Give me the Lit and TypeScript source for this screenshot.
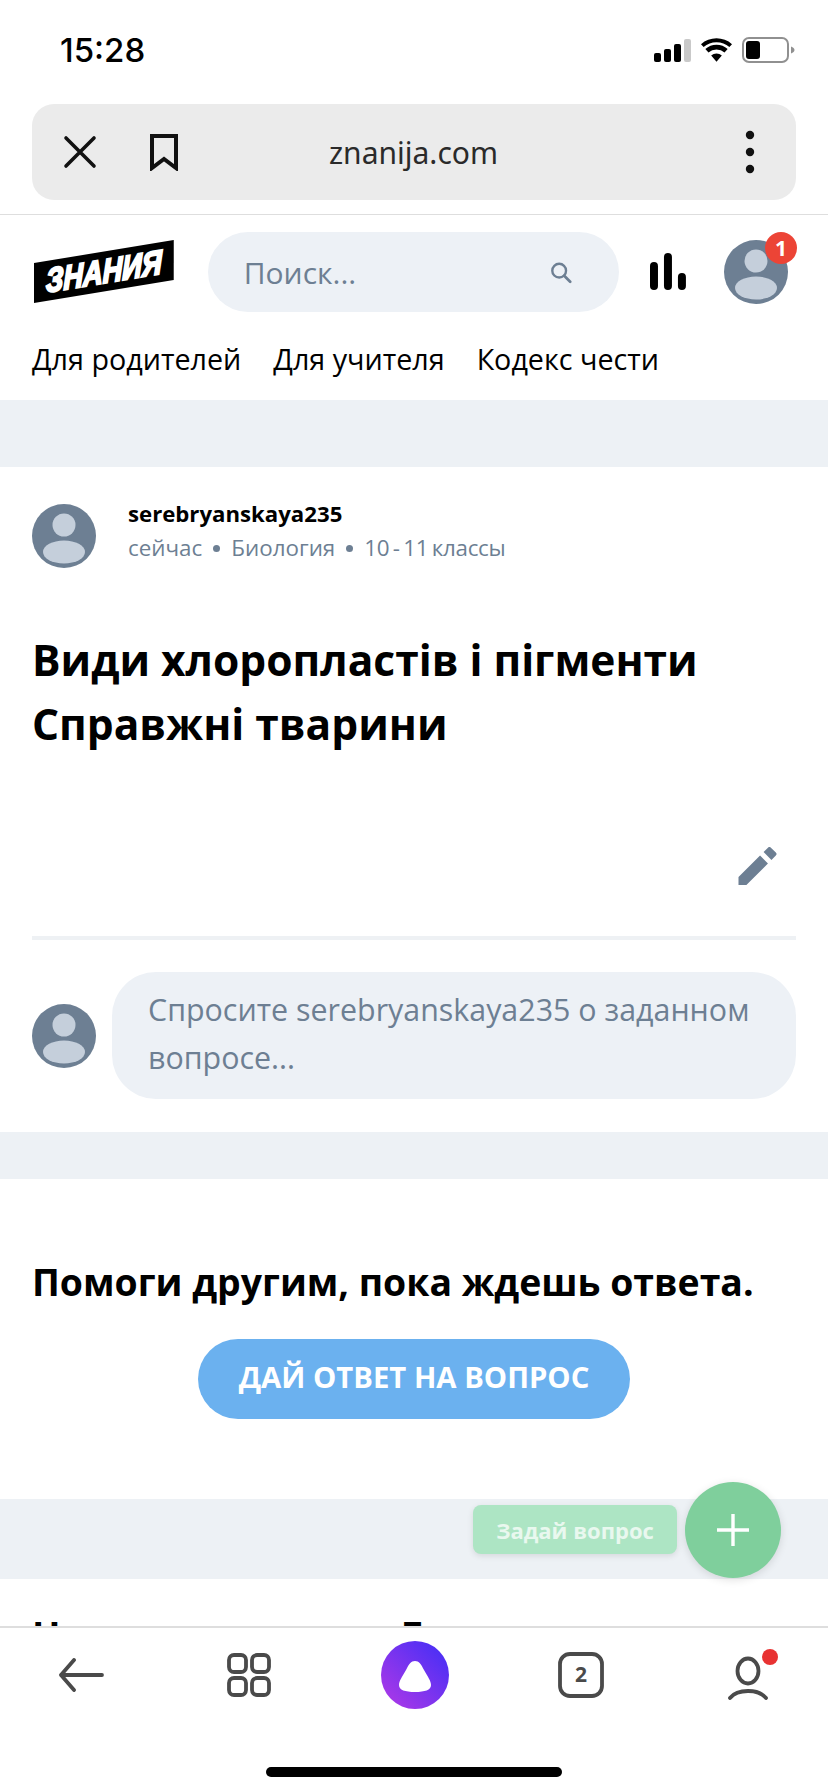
import { LitElement, html, css } from "lit";
import { customElement } from "lit/decorators.js";

const avatar = (size: number) => html`<svg class="avatar" width=${size} height=${size} viewBox="0 0 64 64">
  <circle cx="32" cy="32" r="32" fill="#6d7f93"/>
  <circle cx="32" cy="21" r="11.5" fill="#c5cfdb"/>
  <ellipse cx="32" cy="48" rx="21" ry="11.5" fill="#c5cfdb"/>
</svg>`;

@customElement("app-root")
export class AppRoot extends LitElement {
  static styles = css`
    :host { display: block; width: 828px; height: 1792px; overflow: hidden; background: #fff; position: relative;
      font-family: "Open Sans", "Noto Sans", sans-serif; color: #000; }
    * { box-sizing: border-box; }
    .page { display: flex; flex-direction: column; height: 1792px; }
    .status { height: 104px; flex: none; display: flex; align-items: flex-start; justify-content: space-between; padding: 30px 33px 0 60px; }
    .time { font-family: Inter, sans-serif; font-weight: 500; font-size: 33px; line-height: 40px; }
    .status-icons { display: flex; align-items: center; gap: 10px; height: 40px; }
    .browser { flex: none; height: 111px; padding: 0 32px; border-bottom: 1px solid #dedede; }
    .urlbar { height: 96px; border-radius: 22px; background: #ebebeb; display: grid; grid-template-columns: 1fr auto 1fr; align-items: center; padding: 0 41px 0 31px; }
    .url-left { display: flex; align-items: center; gap: 52px; }
    .url { font-family: "Noto Sans", sans-serif; font-size: 30px; color: #2a2a2a; margin-left: 9px; }
    .url-right { justify-self: end; display: flex; }
    .main { flex: 1; min-height: 0; overflow: hidden; }
    .topbar { display: flex; align-items: center; height: 96px; margin-top: 9px; padding: 0 40px 0 34px; }
    .search { margin-left: 33px; width: 412px; height: 80px; border-radius: 40px; background: #edf1f6; display: flex; align-items: center; justify-content: space-between; padding: 0 47px 0 36px; color: #6d7f93; font-size: 30px; }
    .charts { margin-left: 31px; }
    .profile { margin-left: 38px; position: relative; width: 64px; height: 64px; }
    .badge { position: absolute; left: 41px; top: -8px; width: 32px; height: 32px; border-radius: 50%; background: #ec4436; color: #fff; font: 700 21px/32px "Open Sans", sans-serif; text-align: center; }
    .nav { display: flex; gap: 32px; padding: 0 32px 4px; height: 80px; align-items: center; font-size: 28.7px; white-space: nowrap; }
    .band { background: #edf1f5; flex: none; }
    .b1 { height: 67px; }
    .b2 { height: 47px; }
    .b3 { height: 80px; }
    .meta-row { display: flex; gap: 32px; padding: 37px 32px 0; align-items: flex-start; }
    .name { font-weight: 700; font-size: 22.2px; line-height: 20px; }
    .meta { display: flex; gap: 11px; align-items: center; font-size: 22.4px; line-height: 30px; color: #6d7f93; margin-top: 9px; }
    .grade { letter-spacing: -0.3px; word-spacing: -2px; }
    .dot { width: 7px; height: 7px; border-radius: 50%; background: #6d7f93; }
    h1 { margin: 0; padding: 60px 32px 0; font-weight: 700; font-size: 42.5px; line-height: 64px; }
    .edit { display: flex; justify-content: flex-end; padding: 91px 51px 0 0; height: 180px; }
    .divider { height: 4px; background: #eef1f4; margin: 0 32px; }
    .ask { display: flex; align-items: center; gap: 16px; padding: 32px 32px 33px; }
    .bubble { flex: 1; height: 127px; border-radius: 44px; background: #edf1f6; color: #6d7f93; font-size: 30.4px; line-height: 48px; padding: 14px 36px; }
    h2 { margin: 0; font-weight: 700; font-size: 37.4px; line-height: 48px; padding: 0 32px; white-space: nowrap; }
    .help { padding-top: 79px; height: 320px; }
    .cta-wrap { display: flex; justify-content: center; padding-top: 33px; }
    .cta { width: 432px; height: 80px; border-radius: 40px; background: #6bb1ef; color: #fff; font-weight: 700; font-size: 29.3px; display: flex; align-items: center; justify-content: center; padding-bottom: 4px; }
    .next { padding-top: 32px; }
    .next h2 { word-spacing: 6px; }
    .bottom { flex: none; height: 166px; border-top: 2px solid #dedede; background: #fff; position: relative; }
    .tabs { display: grid; grid-template-columns: repeat(5, 1fr); height: 94px; align-items: center; justify-items: center; padding-left: 2px; }
    .tabs > * { display: block; }
    .t-back { margin-right: 7px; }
    .t-grid { margin-right: 2px; }
    .t-count { margin-left: 2px; }
    .t-user { margin-left: 5px; }
    .home { width: 296px; height: 10px; background: #000; border-radius: 5px; margin: 45px auto 0; }
    .fab { position: absolute; left: 685px; top: 1482px; width: 96px; height: 96px; border-radius: 50%; background: #7fcf9c; box-shadow: 0 2px 8px rgba(0,0,0,.12); display: flex; align-items: center; justify-content: center; }
    .tip { position: absolute; left: 473px; top: 1505px; width: 204px; height: 49px; border-radius: 8px; background: #ade5c4; box-shadow: 0 2px 6px rgba(0,0,0,.1); color: #e9f8ef; font-weight: 700; font-size: 22px; display: flex; align-items: center; justify-content: center; }
  `;

  render() {
    return html`<div class="page">
      <div class="status">
        <span class="time">15:28</span>
        <div class="status-icons">
          <svg width="37" height="23" viewBox="0 0 37 23">
            <rect x="0" y="14" width="7" height="9" rx="2" fill="#000"/>
            <rect x="10" y="10" width="7" height="13" rx="2" fill="#000"/>
            <rect x="20" y="5" width="7" height="18" rx="2" fill="#000"/>
            <rect x="30" y="0" width="7" height="23" rx="2" fill="#c9c9c9"/>
          </svg>
          <svg width="31" height="24" viewBox="0 0 32 24">
            <path d="M16 24l-5.5-6.200a8 8 0 0 1 11 0zM7.700 14.600l-3.200-3.600a17 17 0 0 1 23 0l-3.200 3.600a12.400 12.400 0 0 0-16.600 0zM2.700 9L0 6a24 24 0 0 1 32 0l-2.700 3a20 20 0 0 0-26.600 0z" fill="#000"/>
          </svg>
          <svg width="53" height="26" viewBox="0 0 53 26">
            <rect x="1" y="1" width="45" height="24" rx="6" fill="none" stroke="#909090" stroke-width="2"/>
            <rect x="4" y="4" width="14" height="18" rx="3" fill="#000"/>
            <path d="M49 9.500c2.200.7 3.500 2 3.500 3.500s-1.300 2.800-3.500 3.500z" fill="#909090"/>
          </svg>
        </div>
      </div>
      <div class="browser">
        <div class="urlbar">
          <div class="url-left">
            <svg width="34" height="34" viewBox="0 0 34 34"><path d="M3 3l28 28M31 3L3 31" stroke="#111" stroke-width="3.600" stroke-linecap="round"/></svg>
            <svg width="30" height="38" viewBox="0 0 30 38"><path d="M3 3h24v32L15 26 3 35z" fill="none" stroke="#111" stroke-width="4"/></svg>
          </div>
          <span class="url">znanija.com</span>
          <div class="url-right">
            <svg width="10" height="44" viewBox="0 0 10 44"><circle cx="5" cy="5" r="4.200" fill="#111"/><circle cx="5" cy="22" r="4.200" fill="#111"/><circle cx="5" cy="39" r="4.200" fill="#111"/></svg>
          </div>
        </div>
      </div>
      <div class="main">
        <div class="topbar">
          <svg width="141" height="64" viewBox="0 0 141 64">
            <path d="M0 23L140 0v40L0 63z" fill="#000"/>
            <text transform="translate(70 31) skewY(-9.4)" x="0" y="12" text-anchor="middle" font-family="'Liberation Sans',sans-serif" font-weight="700" font-style="italic" font-size="34" fill="#fff" stroke="#fff" stroke-width="2.200" textLength="116" lengthAdjust="spacingAndGlyphs">ЗНАНИЯ</text>
          </svg>
          <div class="search">
            <span>Поиск...</span>
            <svg width="22" height="23" viewBox="0 0 24 24"><circle cx="10" cy="10" r="7.500" fill="none" stroke="#6d7f93" stroke-width="2.600"/><path d="M15.500 15.500L22 22" stroke="#6d7f93" stroke-width="3" stroke-linecap="round"/></svg>
          </div>
          <svg class="charts" width="36" height="38" viewBox="0 0 36 38">
            <rect x="0" y="9" width="8" height="28" rx="4" fill="#000"/>
            <rect x="14" y="0" width="8" height="37" rx="4" fill="#000"/>
            <rect x="28" y="20" width="8" height="17" rx="4" fill="#000"/>
          </svg>
          <div class="profile">${avatar(64)}<span class="badge">1</span></div>
        </div>
        <div class="nav"><span>Для родителей</span><span>Для учителя</span><span>Кодекс чести</span></div>
        <div class="band b1"></div>
        <div class="meta-row">
          ${avatar(64)}
          <div>
            <div class="name">serebryanskaya235</div>
            <div class="meta"><span>сейчас</span><span class="dot"></span><span>Биология</span><span class="dot"></span><span class="grade">10 - 11 классы</span></div>
          </div>
        </div>
        <h1>Види хлоропластів і пігменти<br>Справжні тварини</h1>
        <div class="edit">
          <svg width="39" height="38" viewBox="0 0 40 40"><path d="M0 31.700V40h8.300L31 17.300 22.700 9zM39.300 9a2.200 2.200 0 0 0 0-3.100L34.100.7a2.200 2.200 0 0 0-3.100 0l-4.600 4.600 8.300 8.300z" fill="#6d7f93"/></svg>
        </div>
        <div class="divider"></div>
        <div class="ask">
          ${avatar(64)}
          <div class="bubble">Спросите serebryanskaya235 о заданном вопросе...</div>
        </div>
        <div class="band b2"></div>
        <div class="help">
          <h2>Помоги другим, пока ждешь ответа.</h2>
          <div class="cta-wrap"><div class="cta">ДАЙ ОТВЕТ НА ВОПРОС</div></div>
        </div>
        <div class="band b3"></div>
        <div class="next"><h2>Новые вопросы в Биология</h2></div>
      </div>
      <div class="bottom">
        <div class="tabs">
          <svg class="t-back" width="46" height="34" viewBox="0 0 46 34"><path d="M44 17H3M16 2L3 17l13 15" fill="none" stroke="#4a4a4a" stroke-width="3.800" stroke-linecap="round" stroke-linejoin="round"/></svg>
          <svg class="t-grid" width="44" height="44" viewBox="0 0 44 44" fill="none" stroke="#4a4a4a" stroke-width="3.800">
            <rect x="2" y="2" width="17" height="17" rx="5"/><rect x="25" y="2" width="17" height="17" rx="5"/>
            <rect x="2" y="25" width="17" height="17" rx="5"/><rect x="25" y="25" width="17" height="17" rx="5"/>
          </svg>
          <svg width="68" height="68" viewBox="0 0 68 68">
            <defs><linearGradient id="al" x1="0.9" y1="0.1" x2="0.1" y2="0.9"><stop offset="0" stop-color="#4a2ff5"/><stop offset="1" stop-color="#a838e8"/></linearGradient></defs>
            <circle cx="34" cy="34" r="34" fill="url(#al)"/>
            <path d="M34 20c4 0 6 3 9 9 4 7 7 11 7 15 0 5-6 7-16 7s-16-2-16-7c0-4 3-8 7-15 3-6 5-9 9-9z" fill="#fff"/>
          </svg>
          <svg class="t-count" width="46" height="46" viewBox="0 0 46 46">
            <rect x="2" y="2" width="42" height="42" rx="10" fill="none" stroke="#4a4a4a" stroke-width="3.800"/>
            <text x="23" y="30" text-anchor="middle" font-family="'Open Sans',sans-serif" font-weight="700" font-size="21" fill="#4a4a4a">2</text>
          </svg>
          <svg class="t-user" width="60" height="52" viewBox="0 0 60 52">
            <ellipse cx="30" cy="22" rx="10.500" ry="12.500" fill="none" stroke="#4a4a4a" stroke-width="3.800"/>
            <path d="M12 49c4-5 10-7 18-7s14 2 18 7" fill="none" stroke="#4a4a4a" stroke-width="3.800" stroke-linecap="round"/>
            <circle cx="52" cy="8" r="8" fill="#e83232"/>
          </svg>
        </div>
        <div class="home"></div>
      </div>
    </div>
    <div class="tip">Задай вопрос</div>
    <div class="fab"><svg width="34" height="34" viewBox="0 0 34 34"><path d="M17 1v32M1 17h32" stroke="#fff" stroke-width="3.400"/></svg></div>`;
  }
}
